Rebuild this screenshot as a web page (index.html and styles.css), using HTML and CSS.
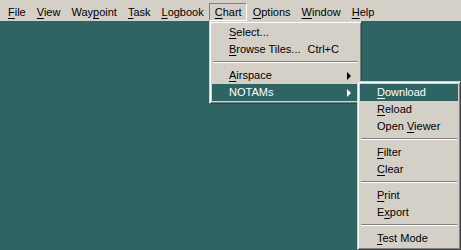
FILE: index.html
```html
<!DOCTYPE html>
<html lang="en">
	<head>
		<meta charset="UTF-8">
		<title>Chart menu</title>
		<link rel="stylesheet" href="styles.css">
	</head>
	<body>
		<div id="menubar">
			<span class="bar-item"><u>F</u>ile</span>
			<span class="bar-item"><u>V</u>iew</span>
			<span class="bar-item">Way<u>p</u>oint</span>
			<span class="bar-item"><u>T</u>ask</span>
			<span class="bar-item"><u>L</u>ogbook</span>
			<span class="bar-item open"><u>C</u>hart</span>
			<span class="bar-item"><u>O</u>ptions</span>
			<span class="bar-item"><u>W</u>indow</span>
			<span class="bar-item"><u>H</u>elp</span>
		</div>

		<div class="menu" id="chart-menu">
			<div class="item"><span class="label"><u>S</u>elect...</span></div>
			<div class="item"><span class="label"><u>B</u>rowse Tiles...</span><span class="key">Ctrl+C</span></div>
			<div class="sep"></div>
			<div class="item sub"><span class="label"><u>A</u>irspace</span></div>
			<div class="item sub hot"><span class="label">NOTAMs</span></div>
		</div>

		<div class="menu" id="notam-menu">
			<div class="item hot"><span class="label"><u>D</u>ownload</span></div>
			<div class="item"><span class="label"><u>R</u>eload</span></div>
			<div class="item"><span class="label">Open <u>V</u>iewer</span></div>
			<div class="sep"></div>
			<div class="item"><span class="label"><u>F</u>ilter</span></div>
			<div class="item"><span class="label"><u>C</u>lear</span></div>
			<div class="sep"></div>
			<div class="item"><span class="label"><u>P</u>rint</span></div>
			<div class="item"><span class="label">E<u>x</u>port</span></div>
			<div class="sep"></div>
			<div class="item"><span class="label"><u>T</u>est Mode</span></div>
		</div>
	</body>
</html>
```

FILE: styles.css
```css
* {
	box-sizing: border-box;
}

body {
	margin:      0;
	height:      250px;
	overflow:    hidden;
	background:  #2f6464;
	font-family: "Liberation Sans", Arial, sans-serif;
	font-size:   11px;
	color:       #000;
}

u {
	text-decoration-thickness: 1px;
	text-underline-offset:     2px;
}

#menubar {
	display:     flex;
	height:      21px;
	padding:     3px 0 0 2px;
	background:  #d4d0c8;
}

.bar-item {
	height:      18px;
	line-height: 16px;
	padding:     0 4px 0 5px;
	border:      1px solid transparent;
}

.bar-item.open {
	border-color: #808080 #fff #fff #808080;
}

.menu {
	position:     absolute;
	background:   #d4d0c8;
	border:       1px solid;
	border-color: #d4d0c8 #404040 #404040 #d4d0c8;
	box-shadow:   inset 1px 1px #fff, inset -1px -1px #808080;
	padding:      2px;
}

#chart-menu {
	left:  209px;
	top:   21px;
	width: 153px;
}

#notam-menu {
	left:  357px;
	top:   81px;
	width: 104px;
}

.item {
	position:    relative;
	display:     flex;
	height:      17px;
	line-height: 17px;
	padding:     0 8px 0 17px;
	white-space: pre;
}

.item .label {
	flex: 1;
}

.item .key {
	padding-right: 12px;
}

.item.hot {
	background: #2f6464;
	color:      #fff;
}

.item.sub::after {
	content:      "";
	position:     absolute;
	right:        8px;
	top:          5px;
	border-style: solid;
	border-width: 4px 0 4px 4px;
	border-color: transparent transparent transparent #000;
}

.item.sub.hot::after {
	border-left-color: #fff;
}

.sep {
	margin:        3px 1px 4px;
	border-top:    1px solid #808080;
	border-bottom: 1px solid #fff;
}
```
